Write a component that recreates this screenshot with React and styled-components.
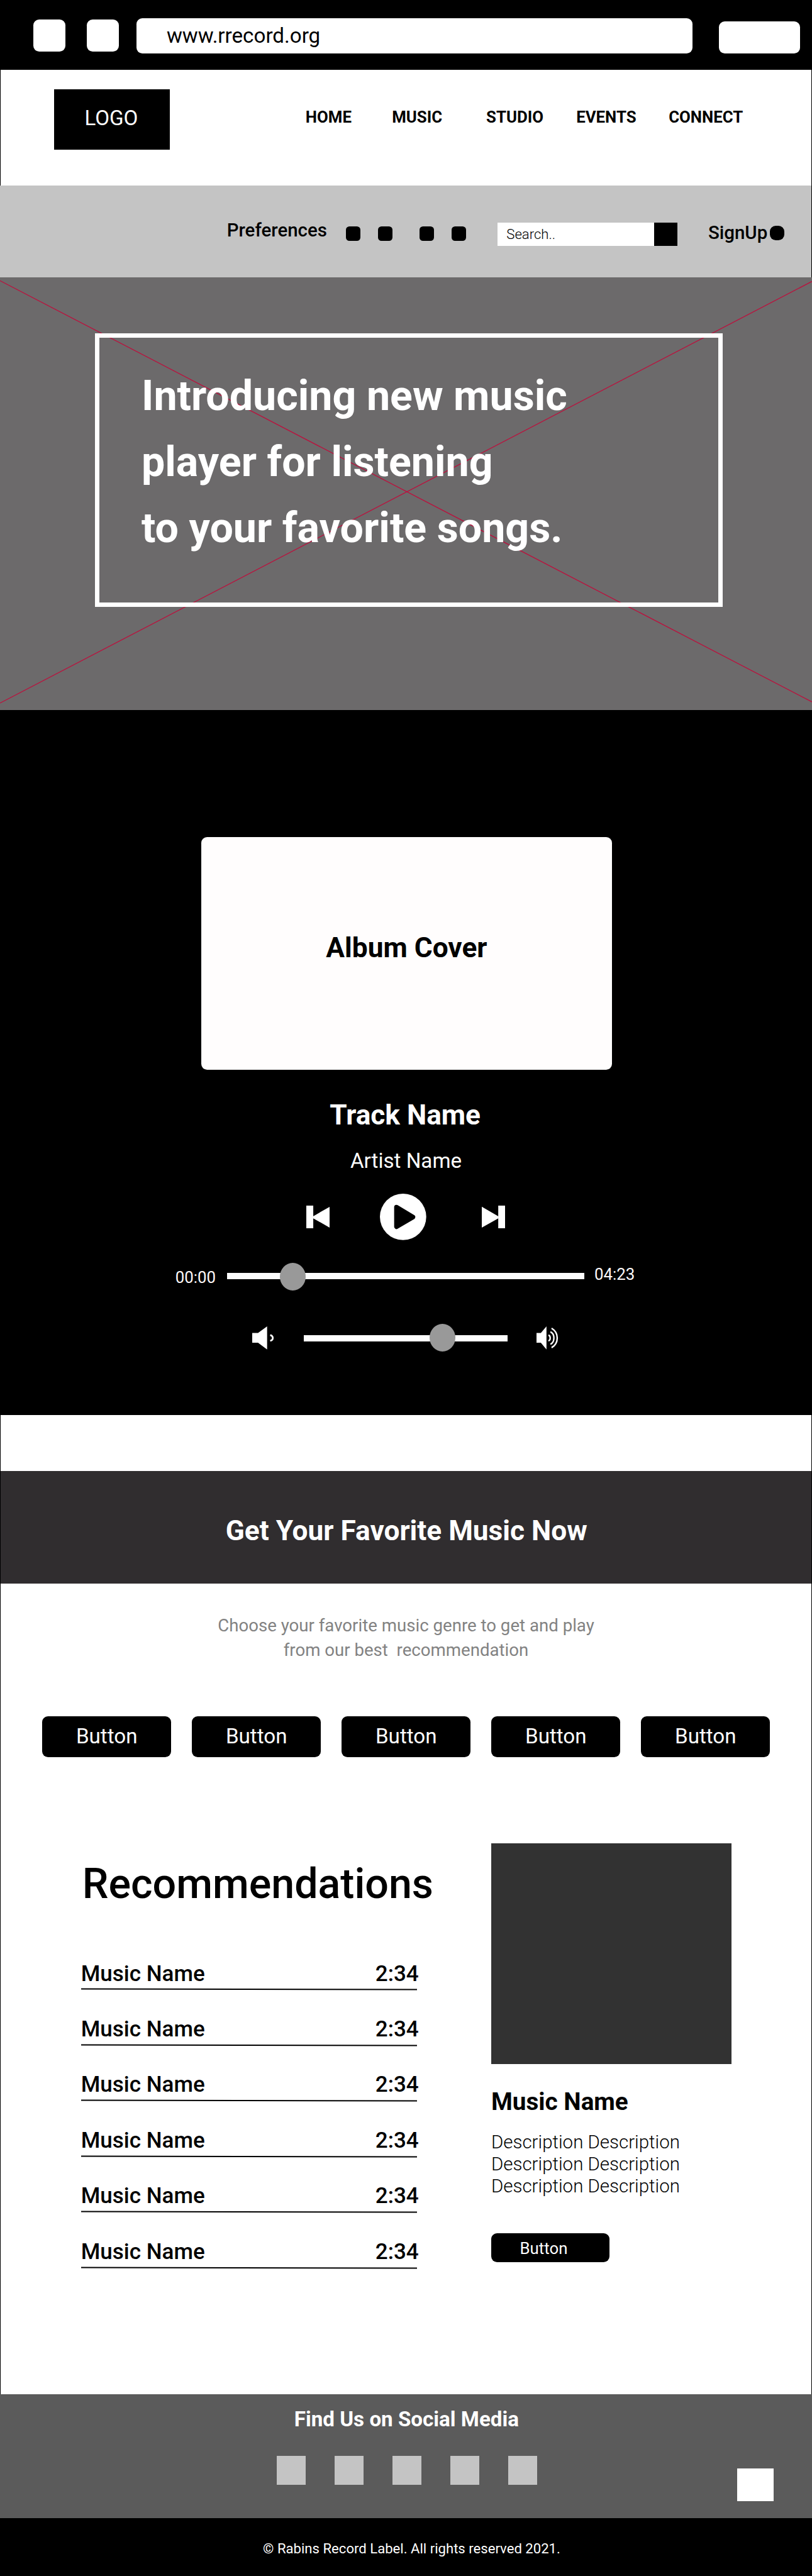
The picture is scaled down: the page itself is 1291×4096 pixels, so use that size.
import React from "react";
import styled, { createGlobalStyle, css } from "styled-components";

/* 1rem is ten design pixels; the root size sets the scale of the whole page. */
const GlobalStyle = createGlobalStyle`
  html {
    font-size: 9.21484px;
  }
  *, *::before, *::after {
    box-sizing: border-box;
  }
  body {
    margin: 0;
    background: #fff;
    font-family: Roboto, "Liberation Sans", sans-serif;
    line-height: 1;
    color: #000;
  }
  h1, h2, h3, p, ul {
    margin: 0;
    padding: 0;
    font-weight: inherit;
  }
  button {
    border: 0;
    padding: 0;
    font: inherit;
    color: inherit;
    background: none;
  }
`;

const sideLines = css`
  box-shadow: inset 1px 0 #000, inset -1px 0 #000;
`;

const Page = styled.div`
  display: flex;
  flex-direction: column;
  width: 140.1rem;
  height: 444.5rem;
  overflow: hidden;
`;

/* Browser bar */

const BrowserBar = styled.div`
  flex: none;
  display: flex;
  align-items: flex-start;
  height: 12rem;
  padding: 3.2rem 0 0 5.7rem;
  background: #000;
`;

const BrowserButton = styled.button`
  flex: none;
  width: ${(p) => (p.$wide ? "14rem" : "5.55rem")};
  height: 5.5rem;
  margin-top: ${(p) => (p.$wide ? "0.5rem" : "0.2rem")};
  margin-right: ${(p) => p.$after || "0"};
  border-radius: 1rem;
  background: #fff;
`;

const AddressField = styled.div`
  flex: none;
  display: flex;
  align-items: center;
  width: 95.9rem;
  height: 6rem;
  margin-right: 4.55rem;
  padding: 0 0 0.2rem 5.2rem;
  border-radius: 1rem;
  background: #fff;
  font-size: 3.6rem;
`;

/* Header */

const Header = styled.header`
  flex: none;
  display: flex;
  align-items: flex-start;
  height: 20rem;
  padding: 3.4rem 0 0 9.3rem;
  ${sideLines}
`;

const Logo = styled.div`
  display: flex;
  align-items: center;
  justify-content: center;
  width: 20rem;
  height: 10.4rem;
  padding: 0 0.2rem 0.42rem 0;
  background: #000;
  color: #fff;
  font-size: 3.6rem;
`;

const Nav = styled.nav`
  display: grid;
  grid-template-columns: 14.9rem 16.27rem 15.53rem 15.95rem auto;
  margin: 3.51rem 0 0 23.43rem;
  font-size: 2.8rem;
  font-weight: 700;
`;

/* Preferences */

const PreferenceBar = styled.div`
  flex: none;
  display: flex;
  align-items: flex-start;
  height: 15.9rem;
  padding-left: 39.14rem;
  background: #c4c4c4;
  box-shadow: inset -1px 0 #000;
`;

const BarLabel = styled.span`
  margin: ${(p) => p.$margin};
  font-size: 3.2rem;
  font-weight: 500;
`;

const OptionPair = styled.div`
  display: flex;
  gap: 3rem;
  margin: 7.1rem 0 0 ${(p) => p.$before};
`;

const Option = styled.button`
  width: 2.5rem;
  height: 2.5rem;
  border-radius: 0.6rem;
  background: #000;
`;

const Search = styled.div`
  display: flex;
  width: 31rem;
  height: 4rem;
  margin: 6.4rem 5.34rem 0 5.46rem;
  background: #fff;
`;

const SearchText = styled.span`
  flex: 1;
  padding: 0.76rem 0 0 1.55rem;
  font-size: 2.4rem;
  font-weight: 300;
`;

const SearchButton = styled.button`
  width: 4rem;
  background: #000;
`;

const Avatar = styled.span`
  width: 2.5rem;
  height: 2.5rem;
  margin: 7rem 0 0 0.46rem;
  border-radius: 1rem;
  background: #000;
`;

/* Hero */

const Hero = styled.section`
  flex: none;
  position: relative;
  height: 74.6rem;
  padding: 9.6rem 0 0 16.44rem;
  background: #6c6a6b;
`;

const Cross = styled.svg`
  position: absolute;
  inset: 0;
  width: 100%;
  height: 100%;
  stroke: #b9143f;
  stroke-width: 1.5;
`;

const HeroFrame = styled.div`
  position: relative;
  width: 108.3rem;
  height: 47.2rem;
  padding: 4.4rem 0 0 7.22rem;
  border: 0.8rem solid #fff;
`;

const HeroTitle = styled.h1`
  color: #fff;
  font-size: 7.2rem;
  font-weight: 700;
  line-height: 11.4rem;
`;

/* Player */

const Player = styled.section`
  flex: none;
  height: 121.7rem;
  padding-top: 21.9rem;
  background: #000;
  color: #fff;
`;

const Album = styled.div`
  display: flex;
  align-items: center;
  justify-content: center;
  width: 70.9rem;
  height: 40.2rem;
  margin-left: 34.7rem;
  padding-bottom: 1.86rem;
  border-radius: 1rem;
  background: #fffdfd;
  color: #000;
  font-size: 4.8rem;
  font-weight: 700;
`;

const TrackName = styled.h2`
  margin: 5.38rem 0.3rem 0 0;
  font-size: 4.8rem;
  font-weight: 700;
  text-align: center;
`;

const ArtistName = styled.p`
  margin-top: 3.69rem;
  font-size: 3.6rem;
  text-align: center;
`;

const Controls = styled.div`
  display: flex;
  align-items: center;
  height: 8rem;
  margin: 3.93rem 0 0 52.8rem;
`;

const SkipIcon = styled.svg`
  width: 4.04rem;
  height: 4rem;
  fill: #fff;
`;

const PlayIcon = styled.svg`
  width: 8rem;
  height: 8rem;
  margin: 0 9.53rem 0 8.76rem;
`;

const SliderRow = styled.div`
  display: flex;
  align-items: flex-start;
  height: 4.77rem;
  margin: ${(p) => p.$margin};
`;

const Time = styled.span`
  margin-top: ${(p) => p.$top};
  font-size: 2.8rem;
  color: #fffafa;
`;

const Track = styled.div`
  position: relative;
  width: ${(p) => p.$width};
  height: 1.1rem;
  margin: ${(p) => p.$margin};
  background: #fdfdfd;
`;

const Thumb = styled.span`
  position: absolute;
  top: ${(p) => p.$top};
  left: ${(p) => p.$at};
  width: 4.44rem;
  height: 4.75rem;
  border-radius: 50%;
  background: #999;
`;

const VolumeIcon = styled.svg`
  width: 4rem;
  height: 4rem;
  margin-top: 0.43rem;
  fill: #fff;

  g {
    fill: none;
    stroke: #fff;
  }
`;

/* Genres */

const Spacer = styled.div`
  flex: none;
  height: 9.6rem;
  ${sideLines}
`;

const Banner = styled.h2`
  flex: none;
  display: flex;
  align-items: center;
  justify-content: center;
  height: 19.5rem;
  padding: 1.18rem 0 0 0.15rem;
  background: #302d2f;
  color: #fff;
  font-size: 4.8rem;
  font-weight: 700;
  ${sideLines}
`;

const Genres = styled.section`
  flex: none;
  height: 29.9rem;
  padding-top: 5.22rem;
  ${sideLines}
`;

const Intro = styled.p`
  color: #828282;
  font-size: 3rem;
  line-height: 4.2rem;
  text-align: center;
`;

const IntroLine = styled.span`
  display: block;
  white-space: pre;
`;

const GenreList = styled.div`
  display: flex;
  gap: 3.6rem;
  margin: 9.27rem 0 0 7.3rem;
`;

const GenreButton = styled.button`
  width: 22.23rem;
  height: 7rem;
  padding-bottom: 0.28rem;
  border-radius: 1rem;
  background: #000;
  color: #fff;
  font-size: 3.6rem;
`;

/* Recommendations */

const Recommendations = styled.section`
  flex: none;
  display: grid;
  grid-template-columns: 70.85rem 41.5rem;
  align-items: start;
  height: 109.9rem;
  padding: 14.92rem 0 0 13.9rem;
  ${sideLines}
`;

const SongColumn = styled.div`
  padding-top: 3.28rem;
`;

const SongHeading = styled.h2`
  margin: 0 0 10.05rem 0.28rem;
  font-size: 7.2rem;
  font-weight: 500;
`;

const Song = styled.div`
  width: 58.35rem;
  height: 9.6rem;
`;

const SongInfo = styled.div`
  display: flex;
  justify-content: space-between;
  margin-left: 0.07rem;
  font-size: 3.8rem;
  font-weight: 500;
`;

const SongRule = styled.div`
  width: 57.9rem;
  height: 0.2rem;
  margin: 0.75rem 0 0 0.1rem;
  background: #000;
  transform: rotate(0.12deg);
`;

const Cover = styled.div`
  height: 38.06rem;
  background: #323232;
`;

const CardTitle = styled.h3`
  margin-top: 4.47rem;
  font-size: 4.2rem;
  font-weight: 700;
`;

const Description = styled.p`
  margin-top: 2.93rem;
  font-size: 3.2rem;
  font-weight: 300;
  line-height: 3.78rem;
`;

const CardButton = styled.button`
  display: flex;
  align-items: center;
  width: 20.4rem;
  height: 5rem;
  margin-top: 6.29rem;
  padding: 0.38rem 0 0 4.95rem;
  border-radius: 1rem;
  background: #000;
  color: #fff;
  font-size: 2.8rem;
`;

/* Footer */

const Social = styled.footer`
  flex: none;
  position: relative;
  height: 21.4rem;
  padding: 2.57rem 0 0 0.2rem;
  background: #5b5b5b;
`;

const SocialTitle = styled.h2`
  color: #fff;
  font-size: 3.6rem;
  font-weight: 700;
  text-align: center;
`;

const SocialLinks = styled.div`
  display: flex;
  justify-content: center;
  gap: 5rem;
  margin: 4.53rem 0 0 0.1rem;
`;

const SocialLink = styled.span`
  width: 5rem;
  height: 5rem;
  background: #c4c4c4;
`;

const FloatingButton = styled.button`
  position: absolute;
  right: 6.6rem;
  bottom: 2.9rem;
  width: 6.35rem;
  height: 5.7rem;
  background: #fff;
`;

const Copyright = styled.div`
  flex: 1;
  display: flex;
  align-items: center;
  justify-content: center;
  padding: 0.52rem 0 0 1.95rem;
  background: #000;
  color: #fff;
  font-size: 2.4rem;
`;

const navItems = ["HOME", "MUSIC", "STUDIO", "EVENTS", "CONNECT"];
const genres = [1, 2, 3, 4, 5];
const socialLinks = [1, 2, 3, 4, 5];
const songs = Array.from({ length: 6 }, (_, id) => ({ id, name: "Music Name", length: "2:34" }));

export default function App() {
  return (
    <>
      <GlobalStyle />
      <Page>
        <BrowserBar>
          <BrowserButton $after="3.75rem" />
          <BrowserButton $after="3rem" />
          <AddressField>www.rrecord.org</AddressField>
          <BrowserButton $wide />
        </BrowserBar>

        <Header>
          <Logo>LOGO</Logo>
          <Nav>
            {navItems.map((item) => (
              <span key={item}>{item}</span>
            ))}
          </Nav>
        </Header>

        <PreferenceBar>
          <BarLabel $margin="6.19rem 0 0">Preferences</BarLabel>
          <OptionPair $before="3.27rem">
            <Option />
            <Option />
          </OptionPair>
          <OptionPair $before="4.7rem">
            <Option />
            <Option />
          </OptionPair>
          <Search>
            <SearchText>Search..</SearchText>
            <SearchButton />
          </Search>
          <BarLabel $margin="6.59rem 0 0">SignUp</BarLabel>
          <Avatar />
        </PreferenceBar>

        <Hero>
          <Cross viewBox="0 0 1401 746" preserveAspectRatio="none">
            <line x1="0" y1="5.7" x2="1401" y2="732.6" />
            <line x1="1401" y1="7" x2="0" y2="734.6" />
          </Cross>
          <HeroFrame>
            <HeroTitle>
              Introducing new music
              <br />
              player for listening
              <br />
              to your favorite songs.
            </HeroTitle>
          </HeroFrame>
        </Hero>

        <Player>
          <Album>Album Cover</Album>
          <TrackName>Track Name</TrackName>
          <ArtistName>Artist Name</ArtistName>
          <Controls>
            <SkipIcon viewBox="0 0 40.4 40">
              <rect width="12" height="40" />
              <polygon points="11.4,18.6 40.4,2 40.4,38 11.4,21.6" />
            </SkipIcon>
            <PlayIcon viewBox="0 0 80 80">
              <circle cx="40" cy="40" r="40" fill="#fff" />
              <polygon
                points="28.6,23.2 57,40.4 28.6,57"
                stroke="#000"
                strokeWidth="8"
                strokeLinejoin="round"
              />
            </PlayIcon>
            <SkipIcon viewBox="0 0 40.4 40">
              <rect x="28.4" width="12" height="40" />
              <polygon points="29,18.6 0,2 0,38 29,21.6" />
            </SkipIcon>
          </Controls>
          <SliderRow $margin="3.93rem 0 0 30.24rem">
            <Time $top="1.21rem">00:00</Time>
            <Track $width="61.6rem" $margin="1.7rem 1.78rem 0 1.97rem">
              <Thumb $top="-1.7rem" $at="9.12rem" />
            </Track>
            <Time $top="0.65rem">04:23</Time>
          </SliderRow>
          <SliderRow $margin="5.77rem 0 0 43.5rem">
            <VolumeIcon viewBox="0 0 40 40">
              <path d="M0 11.3H10L25.7 0V40L10 28.3H0Z" />
              <g strokeWidth="3">
                <path d="M31 15C37 16.5 37 23.5 31 25" />
              </g>
            </VolumeIcon>
            <Track $width="35.23rem" $margin="1.96rem 4.99rem 0 4.88rem">
              <Thumb $top="-1.96rem" $at="21.7rem" />
            </Track>
            <VolumeIcon viewBox="0 0 40 40">
              <path d="M0 11.3H7.5L17.2 0V40L7.5 28.3H0Z" />
              <g strokeWidth="2.6">
                <path d="M20.6 15C24.6 16.5 24.6 23.5 20.6 25" />
                <path d="M24 9.3C32 13 32 27 24 31" />
                <path d="M26 3.2C39 11 39 29 26 36.8" />
              </g>
            </VolumeIcon>
          </SliderRow>
        </Player>

        <Spacer />
        <Banner>Get Your Favorite Music Now</Banner>

        <Genres>
          <Intro>
            <IntroLine>Choose your favorite music genre to get and play</IntroLine>
            <IntroLine>{"from our best  recommendation"}</IntroLine>
          </Intro>
          <GenreList>
            {genres.map((id) => (
              <GenreButton key={id}>Button</GenreButton>
            ))}
          </GenreList>
        </Genres>

        <Recommendations>
          <SongColumn>
            <SongHeading>Recommendations</SongHeading>
            {songs.map((song) => (
              <Song key={song.id}>
                <SongInfo>
                  <span>{song.name}</span>
                  <span>{song.length}</span>
                </SongInfo>
                <SongRule />
              </Song>
            ))}
          </SongColumn>
          <div>
            <Cover />
            <CardTitle>Music Name</CardTitle>
            <Description>
              Description Description
              <br />
              Description Description
              <br />
              Description Description
            </Description>
            <CardButton>Button</CardButton>
          </div>
        </Recommendations>

        <Social>
          <SocialTitle>Find Us on Social Media</SocialTitle>
          <SocialLinks>
            {socialLinks.map((id) => (
              <SocialLink key={id} />
            ))}
          </SocialLinks>
          <FloatingButton />
        </Social>
        <Copyright>© Rabins Record Label. All rights reserved 2021.</Copyright>
      </Page>
    </>
  );
}
